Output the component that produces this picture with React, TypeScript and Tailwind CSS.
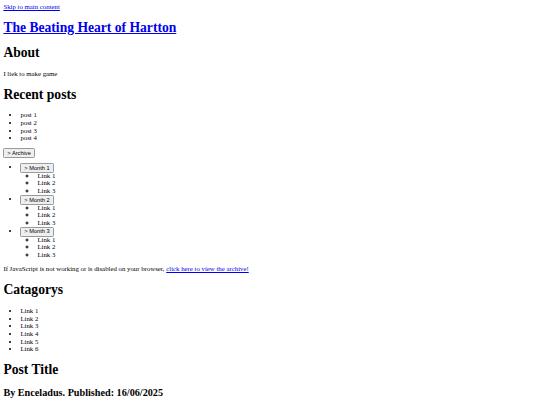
import React from 'react'

// the page is a plain browser-default document, shown at ~42% scale
const months = ['Month 1', 'Month 2', 'Month 3']
const categories = ['Link 1', 'Link 2', 'Link 3', 'Link 4', 'Link 5', 'Link 6']
const posts = ['post 1', 'post 2', 'post 3', 'post 4']

function UaButton({ children }: { children: React.ReactNode }) {
  return (
    <button className="bg-[#efefef] border border-[#9a9a9a] rounded-[3px] px-[7px] py-[2px] text-[13.333px] leading-[15px] text-black align-middle font-['Liberation_Sans',Arial,sans-serif]">
      {children}
    </button>
  )
}

function Heading({ children }: { children: React.ReactNode }) {
  return <h1 className="text-[32px] font-bold leading-[37px] my-[21.44px]">{children}</h1>
}

export default function App() {
  return (
    <div className="[zoom:0.425] bg-white text-black font-['Liberation_Serif','Times_New_Roman',serif] text-[16px] leading-[18px] p-[8px]">
      <a href="#main" className="text-[#0000ee] underline">Skip to main content</a>

      <header>
        <h1 className="text-[32px] font-bold leading-[37px] my-[21.44px]">
          <a href="#" className="text-[#0000ee] underline">The Beating Heart of Hartton</a>
        </h1>
      </header>

      <aside>
        <Heading>About</Heading>
        <p className="my-[16px]">I liek to make game</p>

        <Heading>Recent posts</Heading>
        <ul className="list-disc pl-[40px] my-[16px]">
          {posts.map(p => <li key={p}>{p}</li>)}
        </ul>

        <div className="h-[21px] flex items-center">
          <UaButton>&gt; Archive</UaButton>
        </div>
        <ul className="list-disc pl-[40px] mt-[12px] mb-[16px]">
          {months.map(m => (
            <li key={m}>
              <div className="h-[21px] leading-[21px]">
                <UaButton>&gt; {m}</UaButton>
              </div>
              <ul className="list-[circle] pl-[40px]">
                <li>Link 1</li>
                <li>Link 2</li>
                <li>Link 3</li>
              </ul>
            </li>
          ))}
        </ul>
        <p className="my-[16px]">
          If JavaScript is not working or is disabled on your browser,{' '}
          <a href="#" className="text-[#0000ee] underline">click here to view the archive!</a>
        </p>

        <Heading>Catagorys</Heading>
        <ul className="list-disc pl-[40px] my-[16px]">
          {categories.map(c => <li key={c}>{c}</li>)}
        </ul>
      </aside>

      <main id="main">
        <Heading>Post Title</Heading>
        <h2 className="text-[24px] font-bold leading-[28px] my-[19.92px]">By Enceladus. Published: 16/06/2025</h2>
      </main>
    </div>
  )
}
